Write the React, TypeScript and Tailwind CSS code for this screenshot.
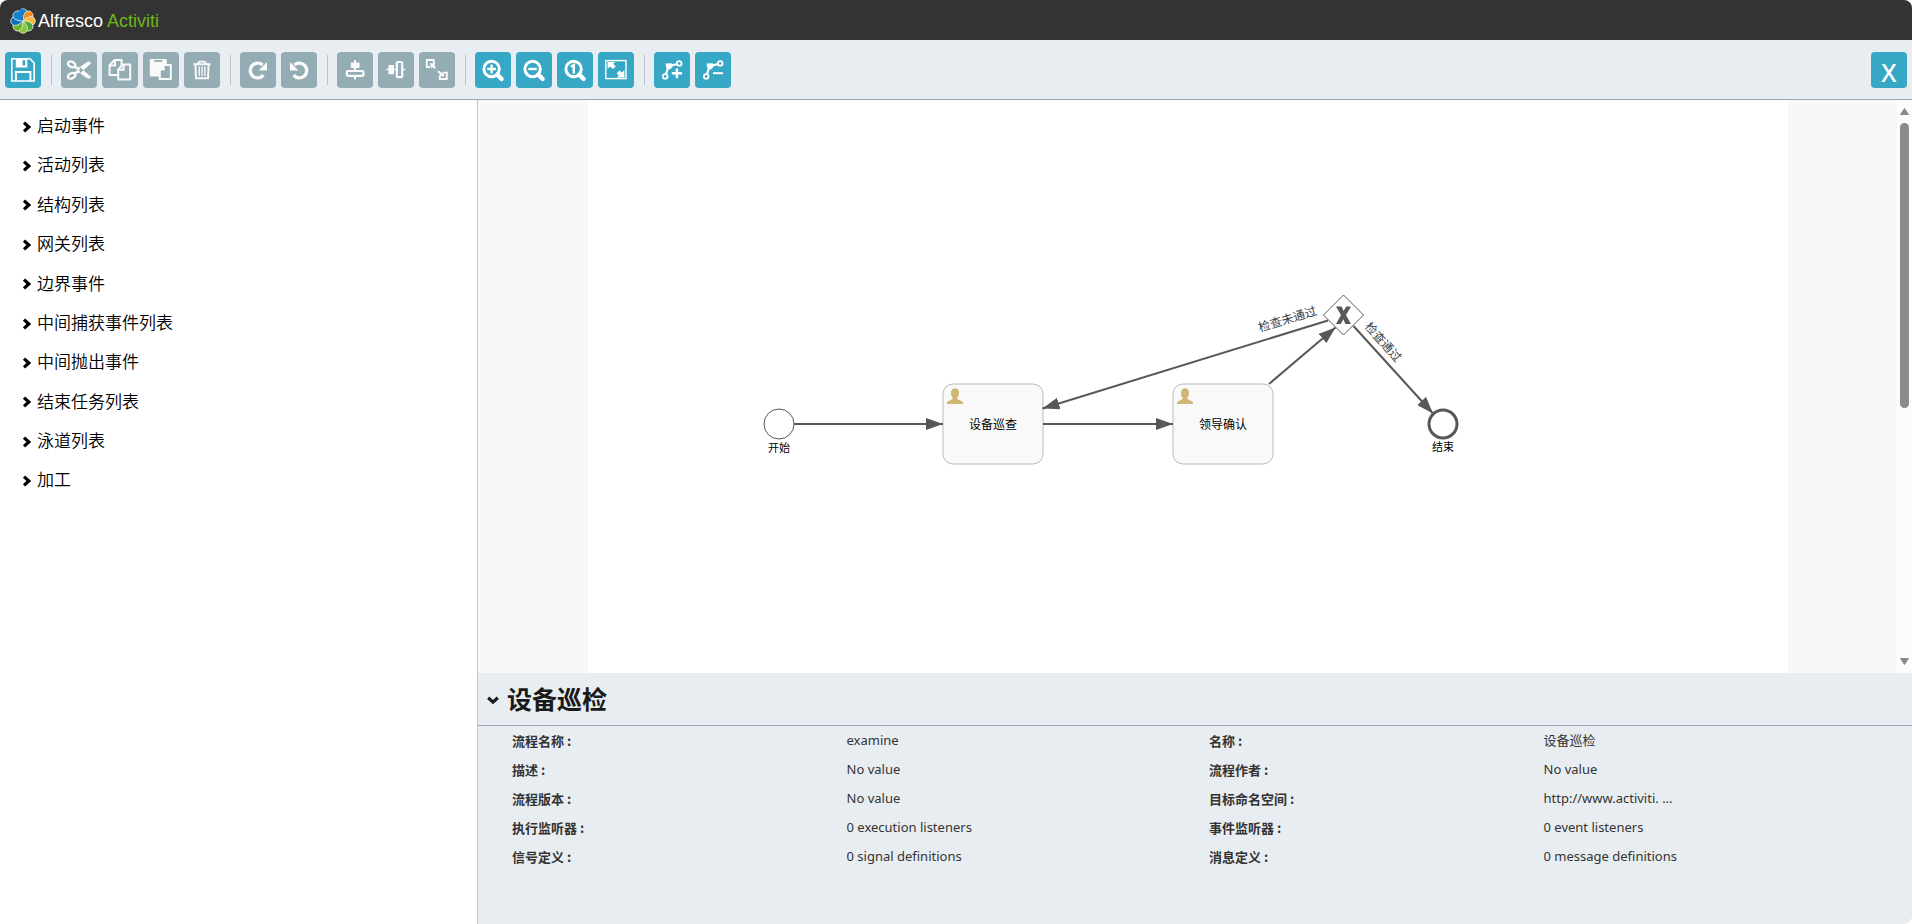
import { ReactNode, useState } from "react";
import { clsx } from "clsx";

interface ToolButton {
  label: string;
  icon: ReactNode;
  disabled?: boolean;
}

const MUTED = "#94adb4";

const FoldedSheet = ({ x, y }: { x: number; y: number }) => (
  <g transform={`translate(${x} ${y})`}>
    <path d="M5 0H12V15H0V5Z" fill={MUTED} stroke="#fafafa" strokeWidth="2" strokeLinejoin="round" />
    <path d="M5.4 0V5.4H0" fill="none" stroke="#fafafa" strokeWidth="2" />
  </g>
);

const Magnifier = ({ children }: { children: ReactNode }) => (
  <g fill="none" stroke="#fff">
    <circle cx="16.6" cy="17" r="7.7" strokeWidth="3" />
    <path d="M22.3 22.6L26.6 27" strokeWidth="4.4" strokeLinecap="round" />
    {children}
  </g>
);

const BendPoint = () => (
  <g fill="none" stroke="#fff" strokeWidth="1.8">
    <circle cx="11.2" cy="24.4" r="2.3" />
    <circle cx="25.2" cy="11.4" r="2.3" />
    <path d="M11.9 22.2L14.8 14.2L23 12" strokeWidth="2.2" />
    <path d="M11.6 11.4L17.6 11.2L19 13.8L16.4 17.6L12.2 16Z" fill="#fff" stroke="none" />
  </g>
);

const toolGroups: ToolButton[][] = [
  [
    {
      label: "保存",
      icon: (
        <g fill="none" stroke="#fff" strokeWidth="1.6">
          <path d="M6.8 6.8H25L29.2 11V29H6.8Z" />
          <path d="M10.8 6.5H22.3V15.5H10.8ZM17.6 8.2V13.6H20.2V8.2Z" fill="#fff" stroke="none" fillRule="evenodd" />
          <path d="M10.9 29V20H25.4V29" strokeWidth="2" />
        </g>
      ),
    },
  ],
  [
    {
      label: "剪切",
      disabled: true,
      icon: (
        <g fill="none" stroke="#fafafa">
          <ellipse cx="10.6" cy="12.4" rx="3.9" ry="2.6" strokeWidth="2.3" transform="rotate(25 10.6 12.4)" />
          <ellipse cx="10.6" cy="23.8" rx="3.9" ry="2.6" strokeWidth="2.3" transform="rotate(-25 10.6 23.8)" />
          <path d="M13.5 14.6L18.5 17.4M13.5 21.6L18.5 18.8" strokeWidth="2.8" />
          <path d="M15.6 17.3L27.4 9.2L30.4 11L19.5 20.9ZM15.6 18.9L27.4 27L30.4 25.2L19.5 15.4Z" fill="#fafafa" stroke="none" />
        </g>
      ),
    },
    {
      label: "复制",
      disabled: true,
      icon: (
        <>
          <FoldedSheet x={7.6} y={8} />
          <FoldedSheet x={16.2} y={12.4} />
        </>
      ),
    },
    {
      label: "粘贴",
      disabled: true,
      icon: (
        <>
          <rect x="6.8" y="7" width="17" height="17.4" rx="1.2" fill="#fafafa" />
          <rect x="11.2" y="8" width="8" height="1.8" fill={MUTED} />
          <path d="M16.8 13H27.8V27H16.8Z" fill={MUTED} stroke="#fafafa" strokeWidth="2" />
          <path d="M15.8 12H21.6V18.4H15.8Z" fill="#fafafa" />
        </>
      ),
    },
    {
      label: "删除",
      disabled: true,
      icon: (
        <g fill="none" stroke="#fafafa" strokeWidth="1.8">
          <path d="M9.4 12.2H26.6" strokeWidth="2" />
          <path d="M14 12V11L15.6 9.6H20.4L22 11V12" />
          <path d="M11.4 13L12 26.2H24L24.6 13" strokeWidth="2" />
          <path d="M15.2 14.6V24M18 14.6V24M20.8 14.6V24" strokeWidth="1.4" />
        </g>
      ),
    },
  ],
  [
    {
      label: "重做",
      disabled: true,
      icon: (
        <>
          <path d="M23.4 23.2A7.4 7.4 0 1 1 22.6 13" fill="none" stroke="#fafafa" strokeWidth="3.4" />
          <path d="M27 10V18.4H18.6Z" fill="#fafafa" />
        </>
      ),
    },
    {
      label: "撤销",
      disabled: true,
      icon: (
        <>
          <path d="M12.6 23.2A7.4 7.4 0 1 0 13.4 13" fill="none" stroke="#fafafa" strokeWidth="3.4" />
          <path d="M9 10V18.4H17.4Z" fill="#fafafa" />
        </>
      ),
    },
  ],
  [
    {
      label: "垂直对齐",
      disabled: true,
      icon: (
        <>
          <path d="M18 8V27.4" stroke="#fafafa" strokeWidth="2" />
          <rect x="13.8" y="10.6" width="8.8" height="5.4" rx="0.8" fill="#fafafa" />
          <rect x="9.8" y="19" width="16.6" height="4.8" rx="1" fill={MUTED} stroke="#fafafa" strokeWidth="2.2" />
        </>
      ),
    },
    {
      label: "水平对齐",
      disabled: true,
      icon: (
        <>
          <path d="M8 17.5H27.6" stroke="#fafafa" strokeWidth="1.2" />
          <rect x="10.4" y="13" width="5.6" height="9.2" rx="0.8" fill="#fafafa" />
          <rect x="18.8" y="10" width="5.4" height="15.2" rx="1" fill={MUTED} stroke="#fafafa" strokeWidth="2.2" />
        </>
      ),
    },
    {
      label: "相同大小",
      disabled: true,
      icon: (
        <g fill="none" stroke="#fafafa" strokeWidth="1.8">
          <path d="M14.8 12V8H7.8V15H11" />
          <path d="M11 11L16.4 11.8L15.2 13.2L17 15.4L15.4 17L13.4 15L12 16.4Z" fill="#fafafa" stroke="none" />
          <path d="M24.8 20.6H27.8V27H20.8V24" />
          <path d="M25.4 24.6L19.8 24L21 22.6L18.4 20L19.8 18.4L22.6 21L24.2 19.4Z" fill="#fafafa" stroke="none" />
        </g>
      ),
    },
  ],
  [
    {
      label: "放大",
      icon: (
        <Magnifier>
          <path d="M12.2 17H21M16.6 12.6V21.4" strokeWidth="2.4" />
        </Magnifier>
      ),
    },
    {
      label: "缩小",
      icon: (
        <Magnifier>
          <path d="M12.4 17H20.8" strokeWidth="2.4" />
        </Magnifier>
      ),
    },
    {
      label: "实际大小",
      icon: (
        <Magnifier>
          <path d="M13.8 14.8L16.8 13V21.6" strokeWidth="2.4" />
        </Magnifier>
      ),
    },
    {
      label: "适应屏幕",
      icon: (
        <>
          <rect x="7.8" y="8.6" width="20.2" height="18" fill="none" stroke="#fff" strokeWidth="1.4" />
          <path d="M9.6 10H17L15.2 11.8L17.8 14.4L14.8 17L12 14.4L9.6 17Z" fill="#fff" />
          <path d="M26.4 25.4H18.8L20.8 23.4L18.6 21.2L21.4 18.4L24 20.6L26.4 18Z" fill="#fff" />
        </>
      ),
    },
  ],
  [
    {
      label: "添加转折点",
      icon: (
        <>
          <BendPoint />
          <path d="M17.8 21.2H28M22.9 16.6V26.2" stroke="#fff" strokeWidth="2.6" />
        </>
      ),
    },
    {
      label: "删除转折点",
      icon: (
        <>
          <BendPoint />
          <path d="M18 21.2H28" stroke="#fff" strokeWidth="2" />
        </>
      ),
    },
  ],
];

const paletteGroups = [
  "启动事件",
  "活动列表",
  "结构列表",
  "网关列表",
  "边界事件",
  "中间捕获事件列表",
  "中间抛出事件",
  "结束任务列表",
  "泳道列表",
  "加工",
];

const properties = [
  { label: "流程名称", value: "examine" },
  { label: "名称", value: "设备巡检" },
  { label: "描述", value: "No value" },
  { label: "流程作者", value: "No value" },
  { label: "流程版本", value: "No value" },
  { label: "目标命名空间", value: "http://www.activiti. ..." },
  { label: "执行监听器", value: "0 execution listeners" },
  { label: "事件监听器", value: "0 event listeners" },
  { label: "信号定义", value: "0 signal definitions" },
  { label: "消息定义", value: "0 message definitions" },
];

// Petals of the Alfresco mark, clockwise from the top
const petals = ["#1a7fc9", "#f68b1f", "#fbb83c", "#4ea83a", "#8cc63f", "#6fb52c", "#0f6fb8", "#1583cf"];

function Logo() {
  return (
    <div className="flex items-center gap-0.5 pl-2.5 pt-0.5 font-['Liberation_Sans',sans-serif] text-[18px] leading-6">
      <svg viewBox="0 0 26 26" className="h-[26px] w-[26px]" aria-hidden="true">
        {petals.map((color, i) => (
          <path
            key={i}
            d="M13 13C10.6 10.6 8.2 7.4 8.6 4.4C9 2 11 0.8 13 0.8S17 2 17.4 4.4C17.8 7.4 15.4 10.6 13 13Z"
            fill={color}
            stroke="#eaf2ee"
            strokeWidth="0.8"
            transform={`rotate(${i * 45} 13 13)`}
          />
        ))}
        {/* left half of the first petal goes back on top of the last one */}
        <path
          d="M13 13C10.6 10.6 8.2 7.4 8.6 4.4C9 2 11 0.8 13 0.8Z"
          fill={petals[0]}
          stroke={petals[0]}
          strokeWidth="0.2"
        />
      </svg>
      <p className="flex gap-1">
        <span className="text-white">Alfresco</span>
        <span className="text-[#70b51c]">Activiti</span>
      </p>
    </div>
  );
}

function Toolbar() {
  return (
    <div className="flex items-center justify-between border-b border-[#9ba7b4] bg-[#e8edf1] px-[5px] pb-[11px] pt-3">
      <div className="flex items-center">
        {toolGroups.map((group, index) => (
          <div key={index} className="flex items-center">
            {index > 0 && <span className="ml-2.5 mr-[9px] h-[30px] w-px bg-[#b9c1c9]" />}
            <div className="flex gap-[5px]">
              {group.map((tool) => (
                <button
                  key={tool.label}
                  type="button"
                  disabled={tool.disabled}
                  aria-label={tool.label}
                  className={clsx("h-9 w-9 rounded", tool.disabled ? "bg-[#94adb4]" : "bg-[#36a7c4]")}
                >
                  <svg viewBox="0 0 36 36" className="h-9 w-9" aria-hidden="true">
                    {tool.icon}
                  </svg>
                </button>
              ))}
            </div>
          </div>
        ))}
      </div>
      <button
        type="button"
        className="h-9 w-9 rounded bg-[#36a7c4] pt-1 font-['Noto_Sans',sans-serif] text-[25px] font-medium leading-8 text-white"
      >
        X
      </button>
    </div>
  );
}

function Palette() {
  return (
    <nav className="w-1/4 border-r border-[#c3c7cb] bg-white pt-[5px]">
      <ul>
        {paletteGroups.map((name) => (
          <li key={name}>
            <button
              type="button"
              className="flex w-full items-center gap-1.5 py-2 pl-[22px] text-left text-[17px] font-[350] leading-snug text-black"
            >
              <svg viewBox="0 0 9 12" className="mt-1 h-3 w-[9px]" aria-hidden="true">
                <path d="M2 1.6L6.8 6L2 10.4" fill="none" stroke="#000" strokeWidth="3.2" />
              </svg>
              {name}
            </button>
          </li>
        ))}
      </ul>
    </nav>
  );
}

function UserTask({ x, y, name }: { x: number; y: number; name: string }) {
  return (
    <g transform={`translate(${x} ${y})`}>
      <rect width="100" height="80" rx="10" fill="#f9f9f9" stroke="#bbb" />
      <path
        d="M4 20V18.6C4.4 17.2 8 16.2 9.6 15V13.6C8.4 12.4 8 11 8 8.6C8 5.8 9.6 4.2 12 4.2S16 5.8 16 8.6C16 11 15.6 12.4 14.4 13.6V15C16 16.2 19.6 17.2 20 18.6V20Z"
        fill="#d1b575"
      />
      <text x="50" y="45" textAnchor="middle" fontSize="12" fill="#000">
        {name}
      </text>
    </g>
  );
}

function ProcessDiagram() {
  return (
    <svg width="1200" height="573" viewBox="0 0 1200 573" className="block font-['Noto_Sans_CJK_SC',sans-serif]">
      <defs>
        <marker
          id="arrow"
          viewBox="0 0 17 12"
          markerWidth="17"
          markerHeight="12"
          refX="17"
          refY="6"
          orient="auto"
          markerUnits="userSpaceOnUse"
        >
          <path d="M0 0L17 6L0 12Z" fill="#585858" />
        </marker>
      </defs>

      <circle cx="191" cy="324" r="15" fill="#fff" stroke="#585858" />
      <text x="191" y="352" textAnchor="middle" fontSize="11" fill="#000">
        开始
      </text>

      <UserTask x={355} y={284} name="设备巡查" />
      <UserTask x={585} y={284} name="领导确认" />

      <path d="M755.5 195L775.5 215L755.5 235L735.5 215Z" fill="#fff" stroke="#585858" />
      <path
        d="M748 206.4H753.6L755.6 211L758.2 206.4H763L758 215L763 224H757.4L755.4 219.2L752.8 224H748L753 215Z"
        fill="#585858"
      />

      <circle cx="855" cy="324" r="14" fill="#fff" stroke="#585858" strokeWidth="3" />
      <text x="855" y="351" textAnchor="middle" fontSize="11" fill="#000">
        结束
      </text>

      <g fill="none" stroke="#585858" strokeWidth="2">
        <path d="M206 324H355" markerEnd="url(#arrow)" />
        <path d="M455 324H585" markerEnd="url(#arrow)" />
        <path d="M681 284L747.5 227.5" markerEnd="url(#arrow)" />
        <path d="M740 220.5L454.5 308.5" markerEnd="url(#arrow)" />
        <path d="M765.5 226L845 313.5" markerEnd="url(#arrow)" />
      </g>

      <text fontSize="12" fill="#373e48" transform="translate(672 232) rotate(-17)">
        检查未通过
      </text>
      <text fontSize="12" fill="#373e48" transform="translate(776 227) rotate(48)">
        检查通过
      </text>
    </svg>
  );
}

function CanvasScrollbar() {
  return (
    <div className="flex w-[15px] flex-col items-center gap-2 bg-[#fcfcfc] py-2" aria-hidden="true">
      <svg viewBox="0 0 9 7" className="h-[7px] w-[9px]">
        <path d="M4.5 0.5L8.5 6.5H0.5Z" fill="#8b8b8b" stroke="#8b8b8b" strokeLinejoin="round" />
      </svg>
      <div className="w-[9px] flex-1">
        <div className="h-[54%] rounded-full bg-[#8b8b8b]" />
      </div>
      <svg viewBox="0 0 9 7" className="h-[7px] w-[9px]">
        <path d="M4.5 6.5L8.5 0.5H0.5Z" fill="#8b8b8b" stroke="#8b8b8b" strokeLinejoin="round" />
      </svg>
    </div>
  );
}

function PropertiesPanel() {
  const [open, setOpen] = useState(true);

  return (
    <section className="bg-[#e8edf1] text-[#333]">
      <h1 className="border-b border-[#9ba7b4] pb-[9px]">
        <button
          type="button"
          aria-expanded={open}
          onClick={() => setOpen(!open)}
          className="flex items-center gap-2 pl-[9px] pt-[7px] text-[25px] font-bold leading-9 text-[#1a1a1a]"
        >
          <svg viewBox="0 0 12 9" className={clsx("mt-1 h-[9px] w-3", !open && "-rotate-90")} aria-hidden="true">
            <path d="M1.2 1.8L6 6.2L10.8 1.8" fill="none" stroke="#1a1a1a" strokeWidth="3.2" />
          </svg>
          设备巡检
        </button>
      </h1>
      {open && (
        <dl className="mx-5 grid grid-cols-2 pb-[53px] text-[13px] leading-[29px]">
          {properties.map(({ label, value }) => (
            <div key={label} className="grid grid-cols-2 px-3.5">
              <dt className="pt-px font-bold leading-7">{label} :</dt>
              <dd className="font-['Noto_Sans','Noto_Sans_CJK_SC',sans-serif]">{value}</dd>
            </div>
          ))}
        </dl>
      )}
    </section>
  );
}

export default function App() {
  return (
    <div className="flex h-screen flex-col overflow-hidden rounded-lg bg-white font-['Noto_Sans_CJK_SC',sans-serif]">
      <header className="flex h-10 shrink-0 items-center bg-[#333]">
        <Logo />
      </header>
      <Toolbar />
      <main className="flex min-h-0 flex-1">
        <Palette />
        <div className="flex w-3/4 flex-col">
          <div className="flex min-h-0 flex-1">
            <div className="flex min-w-0 flex-1 justify-center overflow-hidden bg-[#f8f8f8]">
              <div className="shrink-0 bg-white">
                <ProcessDiagram />
              </div>
            </div>
            <CanvasScrollbar />
          </div>
          <PropertiesPanel />
        </div>
      </main>
    </div>
  );
}
